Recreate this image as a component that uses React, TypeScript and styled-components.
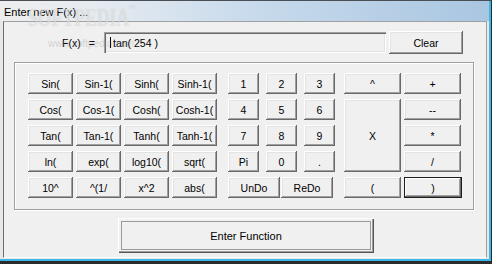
import React from "react";
import styled, { createGlobalStyle, css } from "styled-components";

const Global = createGlobalStyle`
  html, body { margin: 0; padding: 0; background: #fff; }
  * { box-sizing: border-box; }
`;

const UI = `"Liberation Sans", Arial, sans-serif`;

const Root = styled.div`
  position: relative;
  width: 492px;
  height: 264px;
  overflow: hidden;
  border-top: 1px solid #4a4f55;
  border-right: 1px solid #2b2b2b;
  border-bottom: 3px solid #2b2b2b;
  background: #e4e8ec;
`;

const Frame = styled.div`
  display: flex;
  flex-direction: column;
  height: 100%;
  border-right: 2px solid #3db7e8;
  border-bottom: 2px solid #3db7e8;
`;

const TitleBar = styled.div`
  height: 20px;
  flex: none;
  display: flex;
  align-items: center;
  padding: 2px 0 0 4px;
  background: linear-gradient(to right, #ededed 0%, #e7ecf1 18%, #c9dbec 50%, #a9c6e1 100%);
  font: 11px ${UI};
  color: #000;
`;

const Body = styled.div`
  flex: 1;
  display: flex;
  padding: 0 2px 1px 3px;
  background: #e6e9ec;
`;

const Client = styled.div`
  flex: 1;
  display: flex;
  flex-direction: column;
  align-items: flex-start;
  background: #f0f0f0;
  border-top: 1px solid #a0a0a0;
  border-left: 1px solid #6d6d6d;
  border-right: 1px solid #a0a0a0;
  border-bottom: 1px solid #ffffff;
`;

const TopRow = styled.div`
  margin-top: 9px;
  height: 23px;
  display: flex;
  align-items: center;
`;

const LabelCell = styled.div`
  width: 100px;
  padding-left: 58px;
  display: flex;
  gap: 8px;
  font: 10.5px ${UI};
  color: #000;
`;

const Field = styled.div`
  width: 282px;
  height: 21px;
  display: flex;
  align-items: center;
  padding-left: 6px;
  background: #f0f0f0;
  box-shadow: inset 1px 1px #a0a0a0, inset 2px 2px #696969, inset -1px -1px #ffffff,
    inset -2px -2px #e3e3e3;
  font: 10.5px ${UI};
  color: #000;
`;

const Caret = styled.span`
  width: 1px;
  height: 11px;
  background: #000;
  margin-right: 2px;
`;

const Key = styled.button<{ $w: number; $default?: boolean; $tall?: boolean }>`
  width: ${(p) => p.$w}px;
  height: ${(p) => (p.$tall ? "auto" : "21px")};
  padding: 0;
  margin: 0;
  border: none;
  background: #f0f0f0;
  font: 10.5px ${UI};
  color: #000;
  cursor: default;
  box-shadow: inset -1px -1px #696969, inset 1px 1px #ffffff, inset -2px -2px #a0a0a0,
    inset 2px 2px #e3e3e3;
  ${(p) =>
    p.$tall &&
    css`
      grid-row: span 3;
      align-self: stretch;
    `}
  ${(p) =>
    p.$default &&
    css`
      border: 1px solid #1e1e1e;
      box-shadow: inset -1px -1px #696969, inset 1px 1px #ffffff, inset -2px -2px #a0a0a0;
    `}
`;

const ClearButton = styled(Key)`
  height: 23px;
  margin-left: 3px;
`;

const Group = styled.div`
  margin: 8px 0 0 10px;
  width: 460px;
  height: 148px;
  padding: 10px 0 0 13px;
  border: 1px solid #a0a0a0;
  box-shadow: inset 1px 1px #ffffff, 1px 1px #ffffff;
`;

const Pad = styled.div`
  display: grid;
  grid-template-columns: 48px 48px 48px 56px 38px 38px 40px 60px 57px;
  grid-auto-rows: 21px;
  row-gap: 5px;
  justify-items: start;
`;

const EditPair = styled.div`
  grid-column: span 3;
  display: flex;
  gap: 1px;
`;

const EnterButton = styled(Key)`
  margin: 8px 0 0 114px;
  width: 256px;
  height: 35px;
  font-size: 11px;
  box-shadow: inset 1px 1px #ffffff, inset -1px -1px #555555, inset -2px -2px #a0a0a0;
  outline: 1px solid #9a9a9a;
  outline-offset: -4px;
`;

const Watermark = styled.div`
  position: absolute;
  left: 28px;
  top: 2px;
  font: bold 26px "Liberation Serif", serif;
  letter-spacing: 0px;
  color: rgba(255, 255, 255, 0.45);
  text-shadow: 0 0 1px rgba(130, 130, 130, 0.35);
  transform: scaleX(0.68);
  transform-origin: left top;
  pointer-events: none;
  white-space: nowrap;
`;

const Tm = styled.span`
  font-size: 9px;
  vertical-align: top;
`;

const WebMark = styled.div`
  position: absolute;
  left: 48px;
  top: 37px;
  font: 10px ${UI};
  color: rgba(150, 150, 150, 0.35);
  pointer-events: none;
`;

const FUNC = [
  ["Sin(", "Sin-1(", "Sinh(", "Sinh-1("],
  ["Cos(", "Cos-1(", "Cosh(", "Cosh-1("],
  ["Tan(", "Tan-1(", "Tanh(", "Tanh-1("],
  ["ln(", "exp(", "log10(", "sqrt("],
  ["10^", "^(1/", "x^2", "abs("],
];

const DIG = [
  ["1", "2", "3"],
  ["4", "5", "6"],
  ["7", "8", "9"],
  ["Pi", "0", "."],
];

export default function App() {
  const f = (r: number) => FUNC[r].map((t) => <Key key={t} $w={45}>{t}</Key>);
  const d = (r: number) => DIG[r].map((t) => <Key key={t} $w={31}>{t}</Key>);
  return (
    <>
      <Global />
      <Root>
        <Frame>
          <TitleBar>Enter new F(x) ...</TitleBar>
          <Body>
            <Client>
              <TopRow>
                <LabelCell>
                  <span>F(x)</span>
                  <span>=</span>
                </LabelCell>
                <Field>
                  <Caret />
                  tan( 254 )
                </Field>
                <ClearButton $w={74}>Clear</ClearButton>
              </TopRow>
              <Group>
                <Pad>
                  {f(0)}
                  {d(0)}
                  <Key $w={57}>^</Key>
                  <Key $w={57}>+</Key>
                  {f(1)}
                  {d(1)}
                  <Key $w={57} $tall>
                    X
                  </Key>
                  <Key $w={57}>--</Key>
                  {f(2)}
                  {d(2)}
                  <Key $w={57}>*</Key>
                  {f(3)}
                  {d(3)}
                  <Key $w={57}>/</Key>
                  {f(4)}
                  <EditPair>
                    <Key $w={52}>UnDo</Key>
                    <Key $w={52}>ReDo</Key>
                  </EditPair>
                  <Key $w={57}>(</Key>
                  <Key $w={58} $default>
                    )
                  </Key>
                </Pad>
              </Group>
              <EnterButton $w={256}>Enter Function</EnterButton>
            </Client>
          </Body>
        </Frame>
        <Watermark>
          SOFTPEDIA<Tm>™</Tm>
        </Watermark>
        <WebMark>www.softpedia.com</WebMark>
      </Root>
    </>
  );
}
